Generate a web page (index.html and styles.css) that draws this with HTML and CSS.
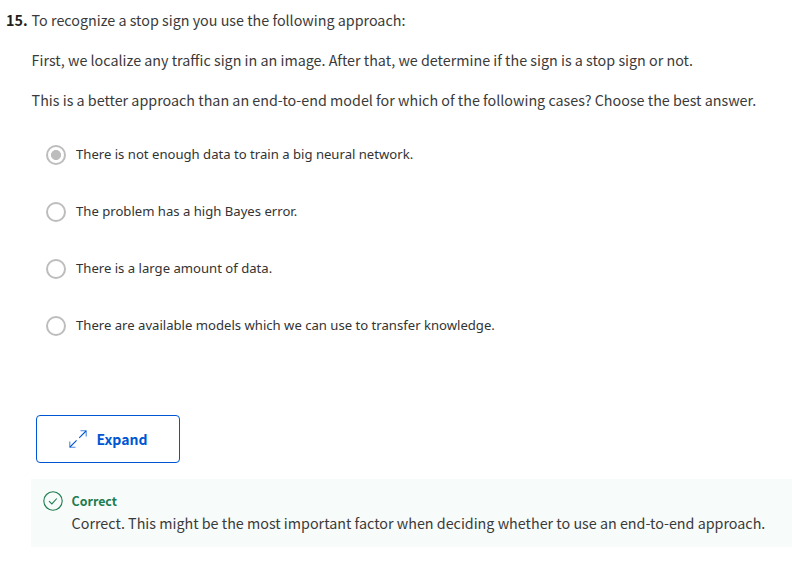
FILE: index.html
```html
<!DOCTYPE html>
<html lang="en">
<head>
<meta charset="utf-8">
<title>Question 15</title>
<link rel="stylesheet" href="styles.css">
</head>
<body>
<main class="question">
  <div class="number">15.</div>
  <div class="content">
    <div class="prompt">
      <p>To recognize a stop sign you use the following approach:</p>
      <p>First, we localize any traffic sign in an image. After that, we determine if the sign is a stop sign or not.</p>
      <p>This is a better approach than an end-to-end model for which of the following cases? Choose the best answer.</p>
    </div>
    <div class="options">
      <div class="option"><span class="radio selected"></span><span class="label">There is not enough data to train a big neural network.</span></div>
      <div class="option"><span class="radio"></span><span class="label">The problem has a high Bayes error.</span></div>
      <div class="option"><span class="radio"></span><span class="label">There is a large amount of data.</span></div>
      <div class="option"><span class="radio"></span><span class="label">There are available models which we can use to transfer knowledge.</span></div>
    </div>
    <button class="expand" type="button">
      <svg width="18" height="18" viewBox="0 0 18 18" fill="none" stroke="#0056d2" stroke-width="1.1"><path d="M1 17 7.6 10.4M10.2 7.8 17 1"/><path stroke-opacity=".7" d="M11.5 .8h5.7v5.7M.8 11.5v5.7h5.7"/></svg>
      <span>Expand</span>
    </button>
    <div class="feedback">
      <svg width="20" height="20" viewBox="0 0 20 20" fill="none" stroke="#1d7c50"><circle cx="10" cy="10" r="9.2" stroke-width="1.1"/><path d="m6 10.2 2.9 2.7 4.9-5.4" stroke-width="1.1"/></svg>
      <div>
        <div class="verdict">Correct</div>
        <div class="reason">Correct. This might be the most important factor when deciding whether to use an end-to-end approach.</div>
      </div>
    </div>
  </div>
</main>
</body>
</html>
```
FILE: styles.css
```css
* { box-sizing: border-box; }
body {
  margin: 0;
  background: #fff;
  color: #3a3a3a;
  font: 400 14.32px/24px "Noto Sans CJK SC", "Noto Sans", sans-serif;
  white-space: nowrap;
  overflow: hidden;
}
.question { display: flex; padding-top: 8px; }
.number { width: 31px; padding-left: 6px; font-weight: 700; flex: none; color: #1f1f1f; }
.content { flex: 1; min-width: 0; }
.prompt { padding-left: 0.6px; }
.prompt p { margin: 0 0 16px; }
.options { padding: 17px 0 0 15px; }
.option {
  display: flex;
  align-items: center;
  gap: 10px;
  height: 20px;
  margin-bottom: 37px;
  color: #333;
  font: 400 13.12px/20px "Noto Sans", sans-serif;
}
.label { padding-bottom: 2px; }
.radio {
  width: 20px;
  height: 20px;
  flex: none;
  border: 2px solid #bdbdbd;
  border-radius: 50%;
}
.selected { background: radial-gradient(circle, #bdbdbd 4.7px, transparent 5.3px); }
.expand {
  display: flex;
  align-items: center;
  justify-content: center;
  gap: 10px;
  width: 144px;
  height: 48px;
  margin: 79px 0 16px 5px;
  padding: 0;
  border: 1px solid #0056d2;
  border-radius: 4px;
  background: #fff;
  color: #0056d2;
  font: 700 14px/24px "Noto Sans CJK SC", "Noto Sans", sans-serif;
}
.feedback {
  display: flex;
  gap: 8.6px;
  height: 68px;
  padding: 12px;
  background: #f7fbf9;
}
.feedback svg { flex: none; }
.verdict { color: #1d7c50; font-weight: 700; font-size: 12.4px; line-height: 20px; }
```
